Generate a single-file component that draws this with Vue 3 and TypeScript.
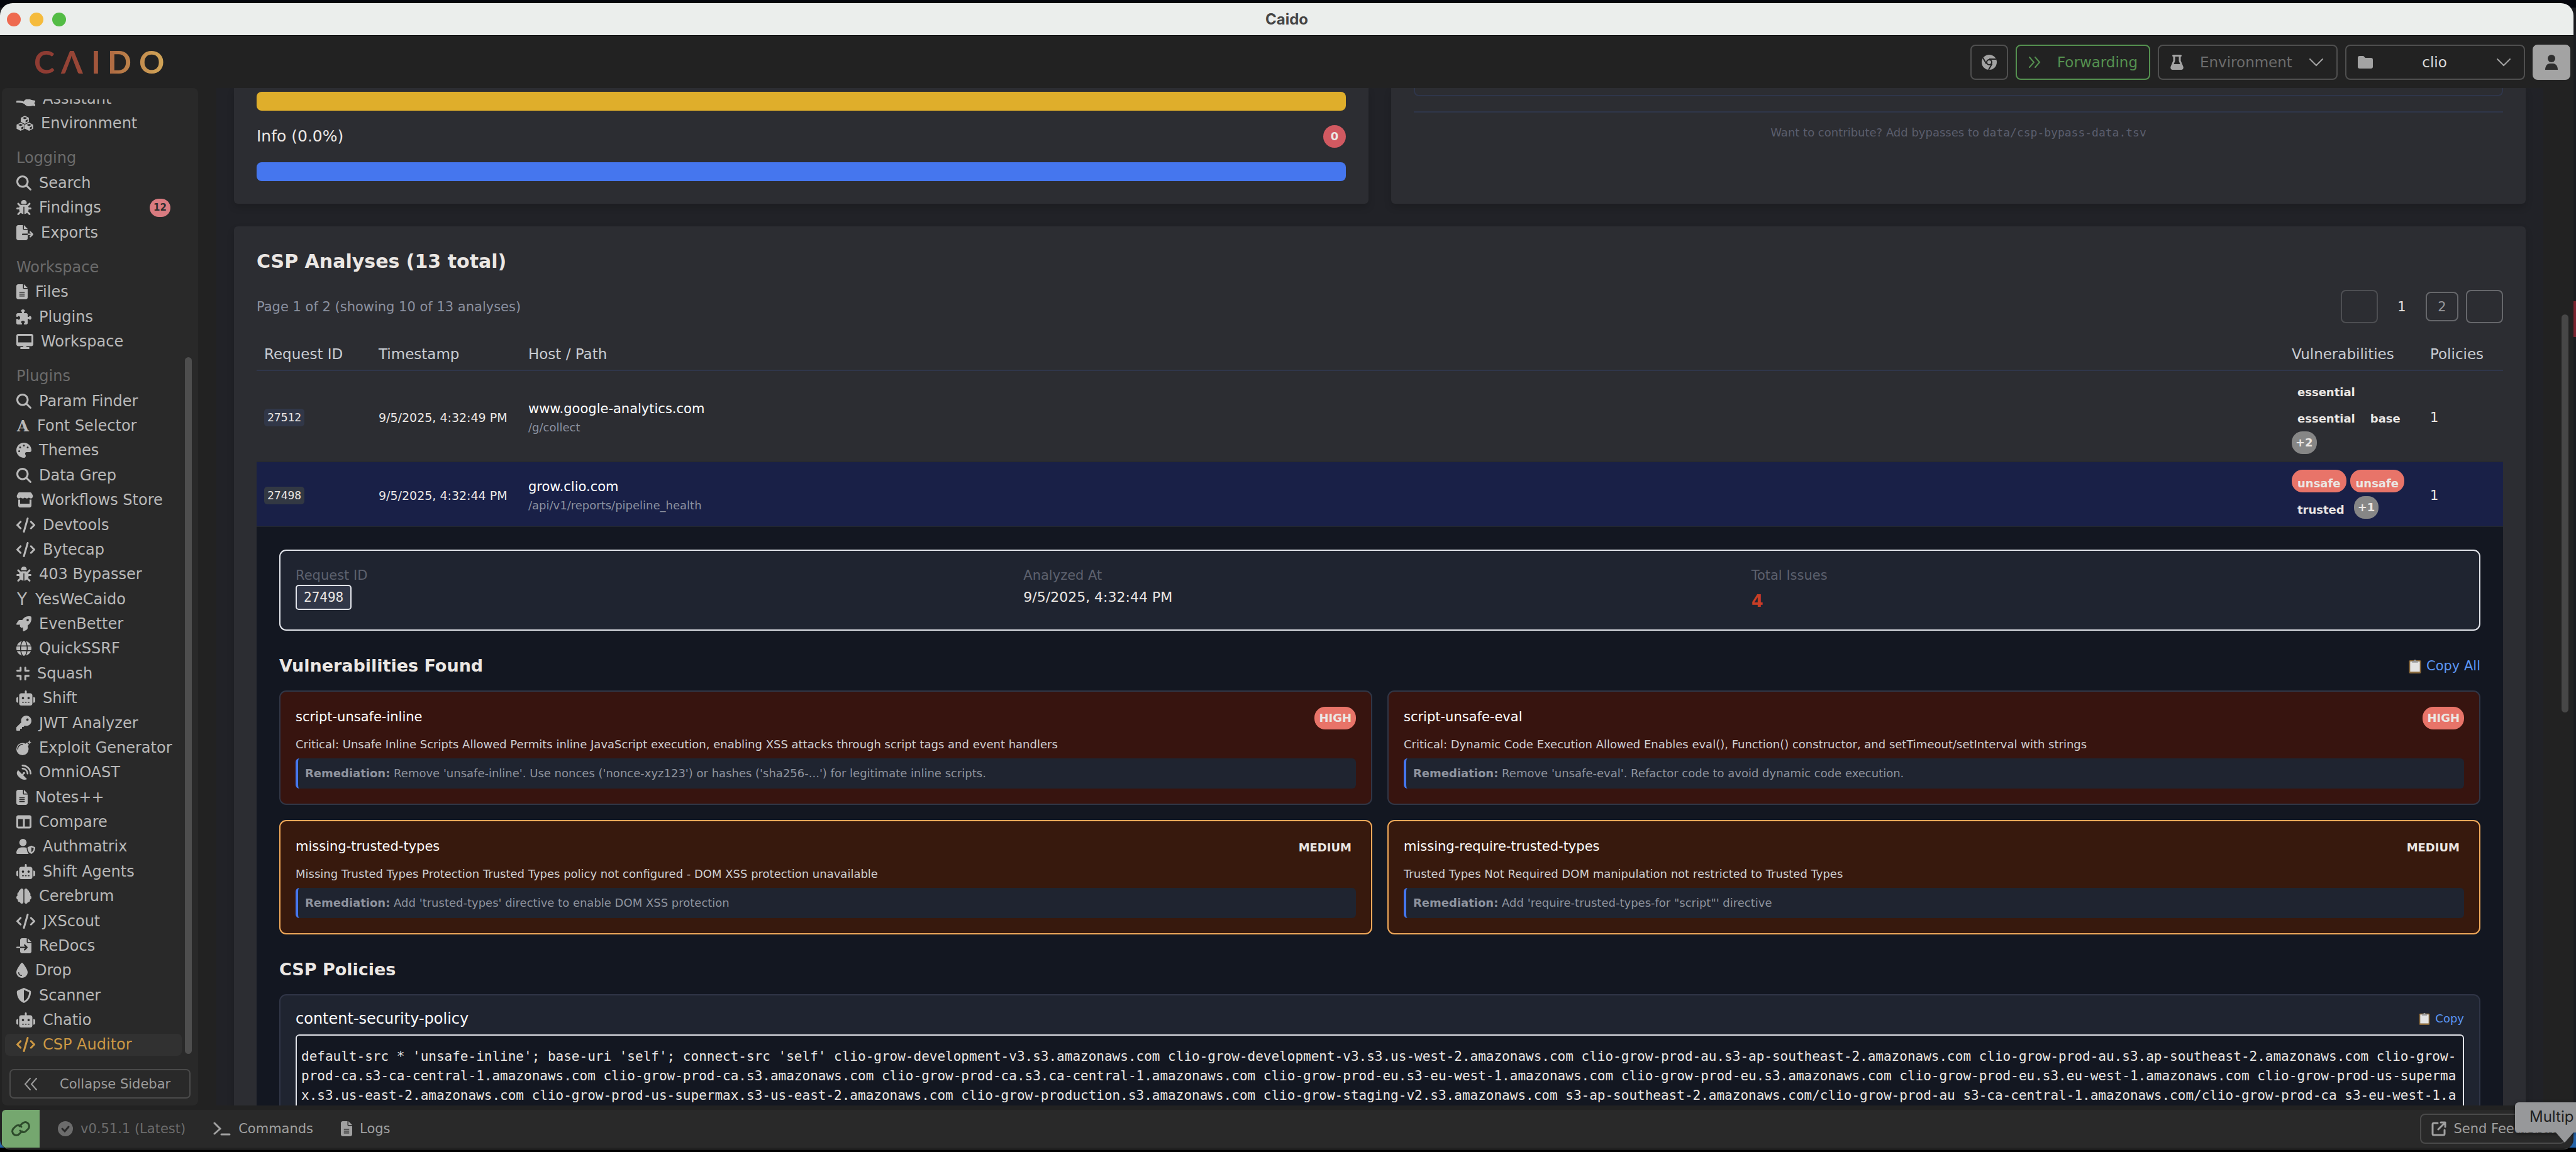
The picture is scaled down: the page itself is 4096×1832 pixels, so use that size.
<script setup lang="ts">
import { ref } from 'vue'

interface Glyph {
  w: number
  d?: string
  stroke?: number
  letter?: string
  serif?: boolean
}

interface NavItem {
  label: string
  icon: string
  badge?: number
}

interface NavGroup {
  title?: string
  items: NavItem[]
}

function cube(cx: number, cy: number): string {
  return (
    `M${cx} ${cy - 138}l136 69v138l-136 69l-136 -69v-138z` +
    `M${cx} ${cy - 98}l-84 38l84 38l84 -38z` +
    `M${cx + 26} ${cy + 22}v70l70 -36v-66z`
  )
}

const glyphs: Record<string, Glyph> = {
  assistant: { w: 640, d: 'M0 330C90 310 180 330 250 350C300 250 420 250 520 300L640 320V380L600 400L640 440V512L560 490C440 540 330 510 270 430C180 390 90 390 0 390z' },
  cubes: { w: 576, d: cube(288, 138) + cube(144, 374) + cube(432, 374) },
  search: { w: 512, d: 'M416 208c0 45.9-14.9 88.3-40 122.7L502.6 457.4c12.5 12.5 12.5 32.8 0 45.3s-32.8 12.5-45.3 0L330.7 376c-34.4 25.2-76.8 40-122.7 40C93.1 416 0 322.9 0 208S93.1 0 208 0S416 93.1 416 208zM208 352a144 144 0 1 0 0-288 144 144 0 1 0 0 288z' },
  bug: { w: 512, d: 'M256 0c53 0 96 43 96 96v3.6c0 15.7-12.7 28.4-28.4 28.4H188.4c-15.7 0-28.4-12.7-28.4-28.4V96c0-53 43-96 96-96zM41.4 105.4c12.5-12.5 32.8-12.5 45.3 0l64 64c.7 .7 1.3 1.4 1.9 2.1c14.2-7.3 30.4-11.4 47.5-11.4H312c17.1 0 33.2 4.1 47.5 11.4c.6-.7 1.2-1.4 1.9-2.1l64-64c12.5-12.5 32.8-12.5 45.3 0s12.5 32.8 0 45.3l-64 64c-.7 .7-1.4 1.3-2.1 1.9c6.2 12 10.1 25.3 11.1 39.5H480c17.7 0 32 14.3 32 32s-14.3 32-32 32H416c0 24.6-5.5 47.8-15.4 68.6c2.2 1.3 4.2 2.9 6 4.8l64 64c12.5 12.5 12.5 32.8 0 45.3s-32.8 12.5-45.3 0l-63.1-63.1c-24.5 21.8-55.8 36.2-90.3 39.6V240c0-8.8-7.2-16-16-16s-16 7.2-16 16V479.2c-34.5-3.4-65.8-17.8-90.3-39.6L86.6 502.6c-12.5 12.5-32.8 12.5-45.3 0s-12.5-32.8 0-45.3l64-64c1.9-1.9 3.9-3.4 6-4.8C101.5 367.8 96 344.6 96 320H32c-17.7 0-32-14.3-32-32s14.3-32 32-32H96.3c1.1-14.1 5-27.5 11.1-39.5c-.7-.6-1.4-1.2-2.1-1.9l-64-64c-12.5-12.5-12.5-32.8 0-45.3z' },
  fileExport: { w: 576, d: 'M0 64C0 28.7 28.7 0 64 0H224V128c0 17.7 14.3 32 32 32H384V288H216c-13.3 0-24 10.7-24 24s10.7 24 24 24H384V448c0 35.3-28.7 64-64 64H64c-35.3 0-64-28.7-64-64V64zM384 336V288H494.1l-39-39c-9.4-9.4-9.4-24.6 0-33.9s24.6-9.4 33.9 0l80 80c9.4 9.4 9.4 24.6 0 33.9l-80 80c-9.4 9.4-24.6 9.4-33.9 0s-9.4-24.6 0-33.9l39-39H384zm0-208H256V0L384 128z' },
  fileImport: { w: 512, d: 'M128 64c0-35.3 28.7-64 64-64H352V128c0 17.7 14.3 32 32 32H512V448c0 35.3-28.7 64-64 64H192c-35.3 0-64-28.7-64-64V336H302.1l-39 39c-9.4 9.4-9.4 24.6 0 33.9s24.6 9.4 33.9 0l80-80c9.4-9.4 9.4-24.6 0-33.9l-80-80c-9.4-9.4-24.6-9.4-33.9 0s-9.4 24.6 0 33.9l39 39H128V64zm0 224v48H24c-13.3 0-24-10.7-24-24s10.7-24 24-24H128zM512 128H384V0L512 128z' },
  file: { w: 384, d: 'M64 0C28.7 0 0 28.7 0 64V448c0 35.3 28.7 64 64 64H320c35.3 0 64-28.7 64-64V160H256c-17.7 0-32-14.3-32-32V0H64zM256 0V128H384L256 0zM112 256H272c8.8 0 16 7.2 16 16s-7.2 16-16 16H112c-8.8 0-16-7.2-16-16s7.2-16 16-16zm0 64H272c8.8 0 16 7.2 16 16s-7.2 16-16 16H112c-8.8 0-16-7.2-16-16s7.2-16 16-16zm0 64H272c8.8 0 16 7.2 16 16s-7.2 16-16 16H112c-8.8 0-16-7.2-16-16s7.2-16 16-16z' },
  puzzle: { w: 512, d: 'M192 104.8c0-9.2-5.8-17.3-13.2-22.8C167.2 73.3 160 61.3 160 48c0-26.5 28.7-48 64-48s64 21.5 64 48c0 13.3-7.2 25.3-18.8 34c-7.4 5.5-13.2 13.6-13.2 22.8c0 12.8 10.4 23.2 23.2 23.2H336c26.5 0 48 21.5 48 48v56.8c0 12.8 10.4 23.2 23.2 23.2c9.2 0 17.3-5.8 22.8-13.2c8.7-11.6 20.7-18.8 34-18.8c26.5 0 48 28.7 48 64s-21.5 64-48 64c-13.3 0-25.3-7.2-34-18.8c-5.5-7.4-13.6-13.2-22.8-13.2c-12.8 0-23.2 10.4-23.2 23.2V464c0 26.5-21.5 48-48 48H279.2c-12.8 0-23.2-10.4-23.2-23.2c0-9.2 5.8-17.3 13.2-22.8c11.6-8.7 18.8-20.7 18.8-34c0-26.5-28.7-48-64-48s-64 21.5-64 48c0 13.3 7.2 25.3 18.8 34c7.4 5.5 13.2 13.6 13.2 22.8c0 12.8-10.4 23.2-23.2 23.2H48c-26.5 0-48-21.5-48-48V343.2C0 330.4 10.4 320 23.2 320c9.2 0 17.3 5.8 22.8 13.2C54.7 344.8 66.7 352 80 352c26.5 0 48-28.7 48-64s-21.5-64-48-64c-13.3 0-25.3 7.2-34 18.8C40.5 250.2 32.4 256 23.2 256C10.4 256 0 245.6 0 232.8V176c0-26.5 21.5-48 48-48H168.8c12.8 0 23.2-10.4 23.2-23.2z' },
  desktop: { w: 576, d: 'M64 0C28.7 0 0 28.7 0 64V352c0 35.3 28.7 64 64 64H240l-10.7 32H160c-17.7 0-32 14.3-32 32s14.3 32 32 32H416c17.7 0 32-14.3 32-32s-14.3-32-32-32H346.7L336 416H512c35.3 0 64-28.7 64-64V64c0-35.3-28.7-64-64-64H64zM512 64V288H64V64H512z' },
  font: { w: 448, letter: 'A', serif: true },
  palette: { w: 512, d: 'M512 256c0 .9 0 1.8 0 2.7c-.4 36.5-33.6 61.3-70.1 61.3H344c-26.5 0-48 21.5-48 48c0 3.4 .4 6.7 1 9.9c2.1 10.2 6.5 20 10.8 29.9c6.1 13.8 12.1 27.5 12.1 42c0 31.8-21.6 60.7-53.4 62c-3.5 .1-7 .2-10.6 .2C114.6 512 0 397.4 0 256S114.6 0 256 0S512 114.6 512 256zM128 288a32 32 0 1 0 -64 0 32 32 0 1 0 64 0zm0-96a32 32 0 1 0 0-64 32 32 0 1 0 0 64zM288 96a32 32 0 1 0 -64 0 32 32 0 1 0 64 0zm96 96a32 32 0 1 0 0-64 32 32 0 1 0 0 64z' },
  store: { w: 576, d: 'M100 0H476C490 0 500 6 508 18L552 92C578 140 548 208 494 208C466 208 444 196 426 178C408 196 384 208 357 208C330 208 306 196 288 178C270 196 246 208 219 208C192 208 168 196 150 178C132 196 110 208 82 208C28 208 -2 140 24 92L68 18C76 6 86 0 100 0zM64 244H128V384H448V244H512V448C512 483 483 512 448 512H128C93 512 64 483 64 448z' },
  code: { w: 640, d: 'M392.8 1.2c-17-4.9-34.7 5-39.6 22l-128 448c-4.9 17 5 34.7 22 39.6s34.7-5 39.6-22l128-448c4.9-17-5-34.7-22-39.6zm80.6 120.1c-12.5 12.5-12.5 32.8 0 45.3L562.7 256l-89.4 89.4c-12.5 12.5-12.5 32.8 0 45.3s32.8 12.5 45.3 0l112-112c12.5-12.5 12.5-32.8 0-45.3l-112-112c-12.5-12.5-32.8-12.5-45.3 0zm-306.7 0c-12.5-12.5-32.8-12.5-45.3 0l-112 112c-12.5 12.5-12.5 32.8 0 45.3l112 112c12.5 12.5 32.8 12.5 45.3 0s12.5-32.8 0-45.3L77.3 256l89.4-89.4c12.5-12.5 12.5-32.8 0-45.3z' },
  y: { w: 384, letter: 'Y' },
  rocket: { w: 512, d: 'M156.6 384.9L125.7 354c-8.5-8.5-11.5-20.8-7.7-32.2c3-8.9 7-20.5 11.8-33.8L24 288c-8.6 0-16.6-4.6-20.9-12.1s-4.2-16.7 .2-24.1l52.5-88.5c13-21.9 36.5-35.3 61.9-35.3l82.3 0c2.4-4 4.8-7.7 7.2-11.3C289.1-4.1 411.1-8.1 483.9 5.3c11.6 2.1 20.6 11.2 22.8 22.8c13.4 72.9 9.3 194.8-111.4 276.7c-3.5 2.4-7.3 4.8-11.3 7.2v82.3c0 25.4-13.4 49-35.3 61.9l-88.5 52.5c-7.4 4.4-16.6 4.5-24.1 .2s-12.1-12.2-12.1-20.9V380.8c-14.1 4.9-26.4 8.9-35.7 11.9c-11.2 3.6-23.4 .5-31.8-7.8zM384 168a40 40 0 1 0 0-80 40 40 0 1 0 0 80z' },
  globe: { w: 512, d: 'M352 256c0 22.2-1.2 43.6-3.3 64H163.3c-2.2-20.4-3.3-41.8-3.3-64s1.2-43.6 3.3-64H348.7c2.2 20.4 3.3 41.8 3.3 64zm28.8-64H503.9c5.3 20.5 8.1 41.9 8.1 64s-2.8 43.5-8.1 64H380.8c2.1-20.6 3.2-42 3.2-64s-1.1-43.4-3.2-64zm112.6-32H376.7c-10-63.9-29.8-117.4-55.3-151.6c78.3 20.7 142 77.5 171.9 151.6zm-149.1 0H167.7c6.1-36.4 15.5-68.6 27-94.7c10.5-23.6 22.2-40.7 33.5-51.5C239.4 3.2 248.7 0 256 0s16.6 3.2 27.8 13.8c11.3 10.8 23 27.9 33.5 51.5c11.6 26 20.9 58.2 27 94.7zm-209 0H18.6C48.6 85.9 112.2 29.1 190.6 8.4C165.1 42.6 145.3 96.1 135.3 160zM8.1 192H131.2c-2.1 20.6-3.2 42-3.2 64s1.1 43.4 3.2 64H8.1C2.8 299.5 0 278.1 0 256s2.8-43.5 8.1-64zM194.7 446.6c-11.6-26-20.9-58.2-27-94.6H344.3c-6.1 36.4-15.5 68.6-27 94.6c-10.5 23.6-22.2 40.7-33.5 51.5C272.6 508.8 263.3 512 256 512s-16.6-3.2-27.8-13.8c-11.3-10.8-23-27.9-33.5-51.5zM135.3 352c10 63.9 29.8 117.4 55.3 151.6C112.2 482.9 48.6 426.1 18.6 352H135.3zm358.1 0c-30 74.1-93.6 130.9-171.9 151.6c25.5-34.2 45.2-87.7 55.3-151.6H493.4z' },
  compress: { w: 448, stroke: 64, d: 'M144 56V160H32M304 56V160H416M32 336H144V456M416 336H304V456' },
  robot: { w: 640, d: 'M320 0c17.7 0 32 14.3 32 32V96H472c39.8 0 72 32.2 72 72V440c0 39.8-32.2 72-72 72H168c-39.8 0-72-32.2-72-72V168c0-39.8 32.2-72 72-72H288V32c0-17.7 14.3-32 32-32zM208 384c-8.8 0-16 7.2-16 16s7.2 16 16 16h32c8.8 0 16-7.2 16-16s-7.2-16-16-16H208zm96 0c-8.8 0-16 7.2-16 16s7.2 16 16 16h32c8.8 0 16-7.2 16-16s-7.2-16-16-16H304zm96 0c-8.8 0-16 7.2-16 16s7.2 16 16 16h32c8.8 0 16-7.2 16-16s-7.2-16-16-16H400zM264 256a40 40 0 1 0 -80 0 40 40 0 1 0 80 0zm152 40a40 40 0 1 0 0-80 40 40 0 1 0 0 80zM48 224H64V416H48c-26.5 0-48-21.5-48-48V272c0-26.5 21.5-48 48-48zm544 0c26.5 0 48 21.5 48 48v96c0 26.5-21.5 48-48 48H576V224h16z' },
  key: { w: 512, d: 'M336 352c97.2 0 176-78.8 176-176S433.2 0 336 0S160 78.8 160 176c0 18.7 2.9 36.8 8.3 53.7L7 391c-4.5 4.5-7 10.6-7 17v80c0 13.3 10.7 24 24 24h80c13.3 0 24-10.7 24-24V448h40c13.3 0 24-10.7 24-24V384h40c6.4 0 12.5-2.5 17-7l33.3-33.3c16.9 5.4 35 8.3 53.7 8.3zM376 96a40 40 0 1 1 0 80 40 40 0 1 1 0-80z' },
  bomb: { w: 512, d: 'M208 96C245 96 280 106 310 122L336 96C346 86 358 86 368 96L416 144C426 154 426 166 416 176L390 202C406 232 416 267 416 304A208 208 0 1 1 208 96zM208 160A16 16 0 0 0 208 128C111 128 32 207 32 304A16 16 0 0 0 64 304C64 224 128 160 208 160zM440 0L459 53L512 72L459 91L440 144L421 91L368 72L421 53z' },
  dish: { w: 512, d: 'M60 188L192 320L224 288A36 36 0 1 1 262 322L230 358L362 490C290 530 190 520 96 426C-6 326 -2 262 60 188zM208 0C376 0 512 136 512 304A28 28 0 0 1 456 304C456 167 345 56 208 56A28 28 0 0 1 208 0zM208 104C318 104 408 194 408 304A28 28 0 0 1 352 304C352 225 287 160 208 160A28 28 0 0 1 208 104z' },
  columns: { w: 512, d: 'M0 96C0 60.7 28.7 32 64 32H448c35.3 0 64 28.7 64 64V416c0 35.3-28.7 64-64 64H64c-35.3 0-64-28.7-64-64V96zm64 64V416H224V160H64zm384 0H288V416H448V160z' },
  userShield: { w: 640, d: 'M224 0A124 124 0 1 1 224 248A124 124 0 1 1 224 0zM178 288H270C300 288 326 294 350 306C352 390 376 456 418 512H30C13 512 0 498 0 482C0 374 80 288 178 288zM509 229L625 275C634 279 640 288 640 297C640 362 614 466 509 510C404 466 378 362 378 297C378 288 384 279 393 275zM509 286V452C564 422 586 372 588 316z' },
  brain: { w: 512, d: 'M184 0C215 0 240 25 240 56V456C240 487 215 512 184 512C155 512 131 490 128 462C123 463 118 464 112 464C77 464 48 435 48 400C48 393 49 385 52 379C22 367 0 338 0 304C0 272 19 245 46 232C37 221 32 207 32 192C32 161 54 136 82 130C81 125 80 119 80 112C80 82 100 57 128 51C131 22 155 0 184 0zM328 0C357 0 381 22 384 51C412 57 432 82 432 112C432 119 431 125 430 130C458 136 480 161 480 192C480 207 475 221 466 232C493 245 512 272 512 304C512 338 490 367 460 379C463 385 464 393 464 400C464 435 435 464 400 464C394 464 389 463 384 462C381 490 357 512 328 512C297 512 272 487 272 456V56C272 25 297 0 328 0z' },
  drop: { w: 384, d: 'M192 512C86 512 0 426 0 320C0 228.8 130.2 57.7 166.6 11.7C172.6 4.2 181.5 0 191.1 0h1.8c9.6 0 18.5 4.2 24.5 11.7C253.8 57.7 384 228.8 384 320c0 106-86 192-192 192zM96 336c0-8.8-7.2-16-16-16s-16 7.2-16 16c0 61.9 50.1 112 112 112c8.8 0 16-7.2 16-16s-7.2-16-16-16c-44.2 0-80-35.8-80-80z' },
  shield: { w: 512, d: 'M256 0c4.6 0 9.2 1 13.4 2.9L457.7 82.8c22 9.3 38.4 31 38.3 57.2c-.5 99.2-41.3 280.7-213.6 363.2c-16.7 8-36.1 8-52.8 0C57.3 420.7 16.5 239.2 16 140c-.1-26.2 16.3-47.9 38.3-57.2L242.7 2.9C246.8 1 251.4 0 256 0zm0 66.8V444.8C394 378 431.1 230.1 432 141.4L256 66.8z' },
}

const groups: NavGroup[] = [
  {
    items: [
      { label: 'Assistant', icon: 'assistant' },
      { label: 'Environment', icon: 'cubes' },
    ],
  },
  {
    title: 'Logging',
    items: [
      { label: 'Search', icon: 'search' },
      { label: 'Findings', icon: 'bug', badge: 12 },
      { label: 'Exports', icon: 'fileExport' },
    ],
  },
  {
    title: 'Workspace',
    items: [
      { label: 'Files', icon: 'file' },
      { label: 'Plugins', icon: 'puzzle' },
      { label: 'Workspace', icon: 'desktop' },
    ],
  },
  {
    title: 'Plugins',
    items: [
      { label: 'Param Finder', icon: 'search' },
      { label: 'Font Selector', icon: 'font' },
      { label: 'Themes', icon: 'palette' },
      { label: 'Data Grep', icon: 'search' },
      { label: 'Workflows Store', icon: 'store' },
      { label: 'Devtools', icon: 'code' },
      { label: 'Bytecap', icon: 'code' },
      { label: '403 Bypasser', icon: 'bug' },
      { label: 'YesWeCaido', icon: 'y' },
      { label: 'EvenBetter', icon: 'rocket' },
      { label: 'QuickSSRF', icon: 'globe' },
      { label: 'Squash', icon: 'compress' },
      { label: 'Shift', icon: 'robot' },
      { label: 'JWT Analyzer', icon: 'key' },
      { label: 'Exploit Generator', icon: 'bomb' },
      { label: 'OmniOAST', icon: 'dish' },
      { label: 'Notes++', icon: 'file' },
      { label: 'Compare', icon: 'columns' },
      { label: 'Authmatrix', icon: 'userShield' },
      { label: 'Shift Agents', icon: 'robot' },
      { label: 'Cerebrum', icon: 'brain' },
      { label: 'JXScout', icon: 'code' },
      { label: 'ReDocs', icon: 'fileImport' },
      { label: 'Drop', icon: 'drop' },
      { label: 'Scanner', icon: 'shield' },
      { label: 'Chatio', icon: 'robot' },
      { label: 'CSP Auditor', icon: 'code' },
    ],
  },
]

const active = ref('CSP Auditor')

interface Analysis {
  id: number
  time: string
  host: string
  path: string
  tags: { text: string; high?: boolean }[]
  more: string
  policies: number
}

const analyses: Analysis[] = [
  {
    id: 27512,
    time: '9/5/2025, 4:32:49 PM',
    host: 'www.google-analytics.com',
    path: '/g/collect',
    tags: [{ text: 'essential' }, { text: 'essential' }, { text: 'base' }],
    more: '+2',
    policies: 1,
  },
  {
    id: 27498,
    time: '9/5/2025, 4:32:44 PM',
    host: 'grow.clio.com',
    path: '/api/v1/reports/pipeline_health',
    tags: [{ text: 'unsafe', high: true }, { text: 'unsafe', high: true }, { text: 'trusted' }],
    more: '+1',
    policies: 1,
  },
]

const selected = ref(27498)

const findings = [
  {
    name: 'script-unsafe-inline',
    severity: 'high',
    text: 'Critical: Unsafe Inline Scripts Allowed Permits inline JavaScript execution, enabling XSS attacks through script tags and event handlers',
    fix: "Remove 'unsafe-inline'. Use nonces ('nonce-xyz123') or hashes ('sha256-...') for legitimate inline scripts.",
  },
  {
    name: 'script-unsafe-eval',
    severity: 'high',
    text: 'Critical: Dynamic Code Execution Allowed Enables eval(), Function() constructor, and setTimeout/setInterval with strings',
    fix: "Remove 'unsafe-eval'. Refactor code to avoid dynamic code execution.",
  },
  {
    name: 'missing-trusted-types',
    severity: 'medium',
    text: 'Missing Trusted Types Protection Trusted Types policy not configured - DOM XSS protection unavailable',
    fix: "Add 'trusted-types' directive to enable DOM XSS protection",
  },
  {
    name: 'missing-require-trusted-types',
    severity: 'medium',
    text: 'Trusted Types Not Required DOM manipulation not restricted to Trusted Types',
    fix: "Add 'require-trusted-types-for \"script\"' directive",
  },
]

const policy = [
  "default-src * 'unsafe-inline'; base-uri 'self'; connect-src 'self' clio-grow-development-v3.s3.amazonaws.com clio-grow-development-v3.s3.us-west-2.amazonaws.com clio-grow-prod-au.s3-ap-southeast-2.amazonaws.com clio-grow-prod-au.s3.ap-southeast-2.amazonaws.com clio-grow-",
  'prod-ca.s3-ca-central-1.amazonaws.com clio-grow-prod-ca.s3.amazonaws.com clio-grow-prod-ca.s3.ca-central-1.amazonaws.com clio-grow-prod-eu.s3-eu-west-1.amazonaws.com clio-grow-prod-eu.s3.amazonaws.com clio-grow-prod-eu.s3.eu-west-1.amazonaws.com clio-grow-prod-us-superma',
  'x.s3.us-east-2.amazonaws.com clio-grow-prod-us-supermax.s3-us-east-2.amazonaws.com clio-grow-production.s3.amazonaws.com clio-grow-staging-v2.s3.amazonaws.com s3-ap-southeast-2.amazonaws.com/clio-grow-prod-au s3-ca-central-1.amazonaws.com/clio-grow-prod-ca s3-eu-west-1.a',
].join('\n')
</script>

<template>
  <div class="desktop">
    <div class="window">
      <div class="titlebar">
        <div class="lights">
          <span class="light close"></span>
          <span class="light minimize"></span>
          <span class="light zoom"></span>
        </div>
        <div class="title">Caido</div>
        <div class="lights-spacer"></div>
      </div>

      <header class="topbar">
        <svg class="logo" viewBox="0 0 210 70" role="img" aria-label="Caido">
          <defs>
            <linearGradient id="brand" x1="0" y1="0" x2="210" y2="0" gradientUnits="userSpaceOnUse">
              <stop offset="0.1" stop-color="#8f3c33" />
              <stop offset="0.4" stop-color="#9a4a38" />
              <stop offset="0.7" stop-color="#bb7f49" />
              <stop offset="1" stop-color="#d3a758" />
            </linearGradient>
          </defs>
          <text x="0 43 91 117 167" y="53" fill="url(#brand)">CΛIDO</text>
        </svg>
        <div class="tools">
          <button class="tool square" aria-label="Open browser">
            <svg viewBox="0 0 24 24" class="ic24">
              <circle cx="12" cy="12" r="12" fill="#a3a3a3" />
              <circle cx="12" cy="12" r="4" fill="#a3a3a3" stroke="#222" stroke-width="2" />
              <path d="M12 7H23M7.600 14.500L2 5M16.400 14.500L11 24" stroke="#222" stroke-width="2" fill="none" />
            </svg>
          </button>
          <button class="tool forwarding">
            <svg viewBox="0 0 20 24" class="ic20">
              <path d="M2 4L9 12L2 20M11 4L18 12L11 20" fill="none" stroke="currentColor" stroke-width="2" stroke-linecap="round" />
            </svg>
            Forwarding
          </button>
          <label class="tool picker env">
            <svg viewBox="0 0 448 512" class="ic21">
              <path fill="currentColor" d="M96 0H352A32 32 0 0 1 352 64V196L437 404C455 456 428 512 372 512H76C20 512 -7 456 11 404L96 196V64A32 32 0 0 1 96 0zM160 64V208L116 320H332L288 208V64z" fill-rule="evenodd" />
            </svg>
            <select aria-label="Environment"><option>Environment</option></select>
            <svg viewBox="0 0 24 24" class="ic24 chev"><path d="M2 7L12 17L22 7" /></svg>
          </label>
          <label class="tool picker project">
            <svg viewBox="0 0 24 24" class="ic24">
              <path fill="currentColor" d="M3 2H9L12 5H21A3 3 0 0 1 24 8V19A3 3 0 0 1 21 22H3A3 3 0 0 1 0 19V5A3 3 0 0 1 3 2z" />
            </svg>
            <select aria-label="Project"><option>clio</option></select>
            <svg viewBox="0 0 24 24" class="ic24 chev"><path d="M2 7L12 17L22 7" /></svg>
          </label>
          <button class="tool square user" aria-label="Account">
            <svg viewBox="0 0 24 24" class="ic24">
              <circle cx="12" cy="6" r="6" fill="#2f2f2f" />
              <path fill="#2f2f2f" d="M2 24C2 18 5 14 10 14H14C19 14 22 18 22 24z" />
            </svg>
          </button>
        </div>
      </header>

      <div class="body">
        <aside class="sidebar">
          <div class="nav-wrap">
            <nav class="nav">
              <div class="nav-inner">
                <section v-for="(g, gi) in groups" :key="gi" class="group" :style="{ flexGrow: g.items.length + (g.title ? 1 : 0) }">
                  <h2 v-if="g.title" class="group-title">{{ g.title }}</h2>
                  <a
                    v-for="item in g.items"
                    :key="item.label"
                    href="#"
                    class="nav-item"
                    :class="{ active: item.label === active }"
                    @click.prevent="active = item.label"
                  >
                    <svg :viewBox="`0 0 ${glyphs[item.icon].w} 512`" class="nav-icon" aria-hidden="true">
                      <text
                        v-if="glyphs[item.icon].letter"
                        :x="glyphs[item.icon].w / 2"
                        y="450"
                        text-anchor="middle"
                        :class="glyphs[item.icon].serif ? 'letter-serif' : 'letter-sans'"
                      >{{ glyphs[item.icon].letter }}</text>
                      <path
                        v-else-if="glyphs[item.icon].stroke"
                        :d="glyphs[item.icon].d"
                        fill="none"
                        stroke="currentColor"
                        stroke-linecap="round"
                        stroke-linejoin="round"
                        :stroke-width="glyphs[item.icon].stroke"
                      />
                      <path v-else :d="glyphs[item.icon].d" fill="currentColor" fill-rule="evenodd" />
                    </svg>
                    <span>{{ item.label }}</span>
                    <span v-if="item.badge" class="nav-badge">{{ item.badge }}</span>
                  </a>
                </section>
              </div>
            </nav>
            <div class="rail nav-rail"><div class="thumb"></div></div>
          </div>
          <button class="collapse">
            <svg viewBox="0 0 24 24" class="ic24">
              <path d="M11 3L3 12L11 21M21 3L13 12L21 21" fill="none" stroke="currentColor" stroke-width="2" stroke-linecap="round" />
            </svg>
            <span>Collapse Sidebar</span>
          </button>
        </aside>

        <main class="main">
          <div class="top-cards">
            <section class="card stats">
              <div class="bar yellow"></div>
              <div class="stat-row"><span>Info (0.0%)</span><span class="zero">0</span></div>
              <div class="bar blue"></div>
            </section>
            <section class="card bypass">
              <div class="bypass-list"></div>
              <p class="contribute">Want to contribute? Add bypasses to <code>data/csp-bypass-data.tsv</code></p>
            </section>
          </div>

          <section class="card analyses">
            <h1>CSP Analyses (13 total)</h1>
            <div class="pager">
              <span class="pager-text">Page 1 of 2 (showing 10 of 13 analyses)</span>
              <div class="pages">
                <button class="step" disabled aria-label="Previous page"></button>
                <button class="page current">1</button>
                <button class="page">2</button>
                <button class="step" aria-label="Next page"></button>
              </div>
            </div>

            <table>
              <colgroup>
                <col class="c-id" /><col class="c-time" /><col /><col class="c-vuln" /><col class="c-pol" />
              </colgroup>
              <thead>
                <tr>
                  <th>Request ID</th><th>Timestamp</th><th>Host / Path</th><th>Vulnerabilities</th><th>Policies</th>
                </tr>
              </thead>
              <tbody>
                <tr v-for="a in analyses" :key="a.id" class="row" :class="{ selected: a.id === selected }" @click="selected = a.id">
                  <td><code class="id">{{ a.id }}</code></td>
                  <td class="time">{{ a.time }}</td>
                  <td>
                    <div class="host">{{ a.host }}</div>
                    <div class="path">{{ a.path }}</div>
                  </td>
                  <td class="tag-cell">
                    <div class="tags">
                      <span v-for="(t, i) in a.tags" :key="i" class="tag" :class="{ high: t.high }">{{ t.text }}</span>
                      <span class="more">{{ a.more }}</span>
                    </div>
                  </td>
                  <td class="count">{{ a.policies }}</td>
                </tr>
                <tr>
                  <td colspan="5" class="detail">
                    <div class="summary">
                      <div>
                        <div class="label">Request ID</div>
                        <code class="id large">27498</code>
                      </div>
                      <div>
                        <div class="label">Analyzed At</div>
                        <div class="when">9/5/2025, 4:32:44 PM</div>
                      </div>
                      <div>
                        <div class="label">Total Issues</div>
                        <div class="issues">4</div>
                      </div>
                    </div>

                    <div class="section-head">
                      <h2>Vulnerabilities Found</h2>
                      <button class="copy">
                        <svg viewBox="0 0 20 24" class="clip">
                          <rect x="0" y="2" width="20" height="22" rx="2" fill="#8a6a3c" />
                          <rect x="2" y="4" width="16" height="17" fill="#e4e4e4" />
                          <path d="M5 6V3H8A2 2 0 0 1 12 3H15V6z" fill="#9a9a9a" />
                        </svg>
                        Copy All
                      </button>
                    </div>

                    <div class="findings">
                      <article v-for="f in findings" :key="f.name" class="finding" :class="f.severity">
                        <div class="finding-head">
                          <span class="finding-name">{{ f.name }}</span>
                          <span class="severity">{{ f.severity.toUpperCase() }}</span>
                        </div>
                        <p class="finding-text">{{ f.text }}</p>
                        <div class="fix"><strong>Remediation:</strong> {{ f.fix }}</div>
                      </article>
                    </div>

                    <div class="section-head"><h2>CSP Policies</h2></div>
                    <div class="policy">
                      <div class="policy-head">
                        <span>content-security-policy</span>
                        <button class="copy small">
                          <svg viewBox="0 0 20 24" class="clip">
                            <rect x="0" y="2" width="20" height="22" rx="2" fill="#8a6a3c" />
                            <rect x="2" y="4" width="16" height="17" fill="#e4e4e4" />
                            <path d="M5 6V3H8A2 2 0 0 1 12 3H15V6z" fill="#9a9a9a" />
                          </svg>
                          Copy
                        </button>
                      </div>
                      <pre>{{ policy }}</pre>
                    </div>
                  </td>
                </tr>
              </tbody>
            </table>
          </section>
        </main>
        <div class="rail main-rail"><div class="thumb"></div></div>
      </div>

      <footer class="statusbar">
        <button class="link" aria-label="Connection">
          <svg viewBox="0 0 32 24" class="ic32">
            <g fill="none" stroke="#2d4a2b" stroke-width="3" stroke-linecap="round">
              <path d="M14 8L18 4A6 6 0 0 1 28 12L24 16A6 6 0 0 1 15 15" />
              <path d="M18 16L14 20A6 6 0 0 1 4 12L8 8A6 6 0 0 1 17 9" />
            </g>
          </svg>
        </button>
        <div class="status version">
          <svg viewBox="0 0 24 24" class="ic24">
            <circle cx="12" cy="12" r="12" fill="currentColor" />
            <path d="M7 12L11 16L17 9" fill="none" stroke="#292929" stroke-width="3" stroke-linecap="round" />
          </svg>
          v0.51.1 (Latest)
        </div>
        <button class="status">
          <svg viewBox="0 0 28 24" class="ic28">
            <path d="M2 3L11 12L2 20M13 21H26" fill="none" stroke="currentColor" stroke-width="3" stroke-linecap="round" />
          </svg>
          Commands
        </button>
        <button class="status">
          <svg viewBox="0 0 384 512" class="ic18"><path :d="glyphs.file.d" fill="currentColor" fill-rule="evenodd" /></svg>
          Logs
        </button>
        <div class="feedback-wrap">
          <button class="feedback">
            <svg viewBox="0 0 24 24" class="ic24">
              <path d="M10 3H4A2 2 0 0 0 2 5V20A2 2 0 0 0 4 22H19A2 2 0 0 0 21 20V14M15 2H22V9M22 2L11 13" fill="none" stroke="currentColor" stroke-width="3" stroke-linecap="round" stroke-linejoin="round" />
            </svg>
            Send Feedback
          </button>
        </div>
      </footer>
    </div>
    <div class="tooltip">Multip</div>
  </div>
</template>

<style>
html,
body {
  margin: 0;
  background: #000;
}
</style>

<style scoped>
* {
  box-sizing: border-box;
}

button,
select {
  font: inherit;
  color: inherit;
  background: none;
  border: 0;
  padding: 0;
  margin: 0;
}

h1,
h2,
p,
pre {
  margin: 0;
}

.desktop {
  position: relative;
  height: 100vh;
  overflow: hidden;
  padding: 5px 4px 4px 0;
  background: linear-gradient(#04060c 0 12px, #1b1c20 12px 479px, #7a2430 479px 536px, #1b1c20 536px 1780px, #2563a8 1780px 1825px, #000 1825px);
  font-family: Verdana, "DejaVu Sans", sans-serif;
  font-size: 21px;
  color: #ebe7e4;
}

.window {
  display: flex;
  flex-direction: column;
  height: 100%;
  overflow: hidden;
  background: #222;
  border-radius: 20px 20px 16px 16px;
  border-bottom: 1px solid #3c3c3c;
}

.titlebar {
  display: flex;
  align-items: center;
  flex: none;
  height: 52px;
  background: #ebeeec;
  border-bottom: 1px solid #000;
}

.lights,
.lights-spacer {
  display: flex;
  gap: 14px;
  width: 140px;
  padding-left: 11px;
}

.light {
  width: 22px;
  height: 22px;
  border-radius: 50%;
}

.close { background: #ee6a50; }
.minimize { background: #f5bb3c; }
.zoom { background: #53bc45; }

.title {
  flex: 1;
  text-align: center;
  font: 700 24px Inter, sans-serif;
  color: #454545;
}

.topbar {
  display: flex;
  justify-content: space-between;
  align-items: center;
  flex: none;
  height: 83px;
  padding: 0 5px 0 54px;
}

.logo {
  width: 210px;
  height: 70px;
  overflow: visible;
  font: 700 50px Lato, sans-serif;
}

.tools {
  display: flex;
  gap: 12px;
  font-size: 23px;
}

.tool {
  display: flex;
  align-items: center;
  height: 56px;
  border: 2px solid #4f4f4f;
  border-radius: 8px;
  color: #a3a3a3;
}

.square {
  justify-content: center;
  width: 60px;
}

.user {
  background: #a3a3a3;
  border-color: #a3a3a3;
}

.forwarding {
  gap: 26px;
  padding: 0 18px;
  border-color: #559150;
  color: #559150;
}

.picker {
  width: 286px;
  padding: 0 20px 0 18px;
}

.picker select {
  flex: 1;
  min-width: 0;
  appearance: none;
}

.env { gap: 26px; }
.env select { color: #6c6c6c; margin-right: -26px; }
.project select { color: #dcdcdc; text-align-last: center; }

.chev {
  fill: none;
  stroke: #a3a3a3;
  stroke-width: 2;
  stroke-linecap: round;
}

.ic18 { width: 18px; height: 24px; }
.ic20 { width: 20px; height: 24px; }
.ic21 { width: 21px; height: 24px; }
.ic24 { width: 24px; height: 24px; }
.ic28 { width: 28px; height: 24px; }
.ic32 { width: 32px; height: 24px; }

.tool svg,
.status svg,
.feedback svg,
.collapse svg {
  flex: none;
}

.body {
  display: flex;
  flex: 1;
  min-height: 0;
}

.sidebar {
  display: flex;
  flex-direction: column;
  flex: none;
  width: 312px;
  margin-left: 3px;
  padding: 18px 10px 11px 5px;
  background: #292929;
  border-radius: 8px;
}

.nav-wrap {
  display: flex;
  flex: 1;
  gap: 5px;
  min-height: 0;
}

.nav {
  display: flex;
  flex: 1;
  flex-direction: column;
  min-height: 0;
  overflow: hidden;
}

.nav-inner {
  display: flex;
  flex: 1;
  flex-direction: column;
  gap: 16px;
  margin-top: -21px;
  min-height: 0;
}

.group {
  display: flex;
  flex-direction: column;
  flex-basis: 0;
  min-height: 0;
}

.group-title,
.nav-item {
  display: flex;
  flex: 1 1 0;
  align-items: center;
  min-height: 0;
  margin: 2px 0;
  font-size: 24px;
  font-weight: 400;
  line-height: 34px;
}

.group-title {
  padding-left: 18px;
  color: #6b6b6b;
}

.nav-item {
  gap: 12px;
  padding: 0 18px;
  color: #b9b9b9;
  text-decoration: none;
  white-space: nowrap;
  border-radius: 7px;
}

.nav-item.active {
  background: #313131;
  color: #cc9844;
}

.nav-icon {
  height: 24px;
  flex: none;
  overflow: visible;
}

.letter-serif {
  font: 700 520px "DejaVu Serif", serif;
  fill: currentColor;
}

.letter-sans {
  font: 400 560px "DejaVu Sans", sans-serif;
  fill: currentColor;
}

.nav-badge {
  display: flex;
  align-items: center;
  justify-content: center;
  width: 33px;
  height: 29px;
  margin-left: auto;
  border-radius: 15px;
  background: #d97b80;
  color: #2d2d2d;
  font-size: 15px;
  font-weight: 700;
}

.rail {
  display: flex;
  flex-direction: column;
  flex: none;
}

.thumb {
  width: 11px;
  border-radius: 6px;
  background: #4e4e4e;
}

.nav-rail {
  width: 11px;
  padding-bottom: 5px;
  justify-content: flex-end;
}

.nav-rail .thumb { height: 73%; }

.collapse {
  display: flex;
  align-items: center;
  flex: none;
  gap: 34px;
  height: 47px;
  margin: 19px 2px 0 7px;
  padding: 0 20px;
  border: 2px solid #4a4a4a;
  border-radius: 7px;
  color: #9c9c9c;
}

.main {
  flex: 1;
  min-width: 0;
  margin-left: 29px;
  padding: 0 28px;
  overflow: hidden;
  background: #212227;
}

.main-rail {
  width: 48px;
  padding: 360px 0 0 29px;
}

.main-rail .thumb { height: 633px; background: #474747; }

.card {
  background: #2c2d32;
  border-radius: 6px;
  box-shadow: 0 6px 12px rgba(0, 0, 0, 0.15);
}

.top-cards {
  display: grid;
  grid-template-columns: 1fr 1fr;
  gap: 36px;
  margin-bottom: 36px;
}

.top-cards .card {
  border-radius: 0 0 6px 6px;
}

.stats { padding: 6px 36px 36px; }

.bar {
  height: 30px;
  border-radius: 8px;
}

.yellow { background: #dfae2b; }
.blue { background: #4576ee; }

.stat-row {
  display: flex;
  justify-content: space-between;
  align-items: center;
  padding: 23px 0;
  font-size: 25px;
  line-height: 36px;
}

.zero {
  width: 36px;
  height: 36px;
  border-radius: 18px;
  background: #d15961;
  font-size: 18px;
  font-weight: 700;
  text-align: center;
}

.bypass { padding: 0 36px; }

.bypass-list {
  height: 13px;
  border: 2px solid #2f364a;
  border-top: 0;
  border-radius: 0 0 8px 8px;
}

.contribute {
  margin-top: 24px;
  padding-top: 18px;
  border-top: 2px solid #2f364a;
  font-size: 18px;
  line-height: 28px;
  text-align: center;
  color: #5b5e6d;
}

code,
pre {
  font-family: "DejaVu Sans Mono", monospace;
}

.analyses { padding: 36px 36px 0; }

h1 {
  font-size: 30px;
  line-height: 40px;
}

.pager {
  display: flex;
  justify-content: space-between;
  align-items: center;
  margin: 25px 0 24px;
  color: #8b91a0;
}

.pages {
  display: flex;
  align-items: center;
  gap: 12px;
}

.step,
.page {
  width: 59px;
  height: 53px;
  border: 2px solid #66676b;
  border-radius: 8px;
}

.step:disabled { border-color: #4d4e52; }

.page {
  width: 52px;
  height: 47px;
  color: #96979b;
}

.current {
  border-color: transparent;
  color: #ebe7e4;
}

table {
  width: 100%;
  table-layout: fixed;
  border-collapse: separate;
  border-spacing: 0;
}

.c-id { width: 182px; }
.c-time { width: 238px; }
.c-vuln { width: 220px; }
.c-pol { width: 128px; }

th {
  height: 52px;
  padding: 0 12px;
  border-bottom: 2px solid #30364a;
  font-size: 23px;
  font-weight: 400;
  text-align: left;
  color: #c8ccd2;
}

td { padding: 0; }

.row td {
  padding: 14px 12px 10px;
  border-bottom: 1px solid #23272c;
}

.row .tag-cell {
  padding: 12px;
}

.selected { background: #192047; }

.id {
  display: inline-block;
  padding: 0 5px;
  border-radius: 5px;
  background: #313748;
  font-size: 18px;
  line-height: 28px;
}

.selected .id { background: #323843; }

.time { font-size: 19px; }

.host {
  line-height: 32px;
  color: #fff;
}

.path {
  font-size: 18px;
  line-height: 28px;
  color: #8b91a0;
}

.tags {
  display: flex;
  flex-wrap: wrap;
  gap: 6px;
}

.tag,
.more,
.severity {
  height: 36px;
  border-radius: 17px;
  font-size: 18px;
  font-weight: 700;
  line-height: 36px;
}

.tag {
  padding: 8px 9px 0;
  line-height: 28px;
}

.tag.high,
.high .severity {
  background: #e87469;
}

.more {
  padding: 0 6px;
  background: #868686;
}

.detail {
  padding: 36px 36px 0;
  background: #131721;
}

.summary {
  display: grid;
  grid-template-columns: repeat(3, 1fr);
  gap: 24px;
  height: 129px;
  padding: 24px;
  border: 2px solid #e2e4ea;
  border-radius: 11px;
  background: #1f2430;
}

.label {
  line-height: 30px;
  color: #5d616e;
}

.large {
  padding: 0 11px;
  border: 2px solid #e2e4ea;
  background: #313748;
  font-size: 21px;
  line-height: 36px;
}

.when {
  padding-top: 4px;
  font-size: 22px;
  line-height: 32px;
}

.issues {
  padding-top: 6px;
  font-size: 27px;
  font-weight: 700;
  line-height: 40px;
  color: #c73e26;
}

.section-head {
  display: flex;
  justify-content: space-between;
  align-items: center;
  margin: 36px 0 19px;
}

.section-head h2 {
  font-size: 27px;
  line-height: 40px;
}

.copy {
  display: flex;
  align-items: center;
  gap: 8px;
  color: #5b96f5;
}

.copy.small { font-size: 18px; }

.clip {
  width: 20px;
  height: 23px;
}

.small .clip {
  width: 18px;
  height: 20px;
}

.findings {
  display: grid;
  grid-template-columns: 1fr 1fr;
  gap: 24px;
}

.finding {
  padding: 24px;
  border: 2px solid #303646;
  border-radius: 11px;
  background: #37140f;
}

.finding.medium {
  border-color: #f0a95a;
  background: #37190d;
}

.finding-head {
  display: flex;
  justify-content: space-between;
  line-height: 32px;
}

.finding-name { color: #fff; }

.severity { padding: 0 7px; }

.finding-text {
  margin: 10px 0 9px;
  font-size: 18px;
  line-height: 27px;
  color: #cfd0d3;
}

.fix {
  padding: 0 11px;
  border-left: 4px solid #4576ee;
  border-radius: 6px;
  background: #1f2430;
  font-size: 18px;
  line-height: 48px;
  color: #8f949f;
}

.policy {
  padding: 24px;
  border: 2px solid #303546;
  border-radius: 11px;
  background: #1f2430;
}

.policy-head {
  display: flex;
  justify-content: space-between;
  align-items: center;
  margin-bottom: 12px;
  font-size: 24px;
  line-height: 26px;
  color: #fff;
}

pre {
  padding: 18px 7px 60px;
  border: 2px solid #e2e4ea;
  border-radius: 6px;
  background: #131721;
  font-size: 21px;
  line-height: 31px;
}

.statusbar {
  display: flex;
  align-items: center;
  flex: none;
  height: 60px;
  margin: 7px 3px 2px;
  border-radius: 6px;
  background: #292929;
  color: #a0a0a0;
}

.link {
  display: flex;
  align-items: center;
  justify-content: center;
  width: 60px;
  height: 60px;
  border-radius: 6px 0 0 6px;
  background: #75a76f;
}

.status {
  display: flex;
  align-items: center;
  gap: 12px;
  margin-right: 44px;
}

.version {
  margin-left: 29px;
  color: #6c6c6c;
}

.feedback-wrap {
  margin-left: auto;
  margin-right: 10px;
}

.feedback {
  display: flex;
  align-items: center;
  gap: 11px;
  height: 48px;
  padding: 0 16px;
  border: 2px solid #4a4a4a;
  border-radius: 8px;
}

.tooltip {
  position: absolute;
  right: 0;
  bottom: 31px;
  width: 97px;
  height: 48px;
  padding-left: 23px;
  border-radius: 6px 0 0 6px;
  background: #97989a;
  box-shadow: 0 2px 6px rgba(0, 0, 0, 0.5);
  font: 400 24px/46px Inter, sans-serif;
  color: #1d1d1d;
}

.tooltip::after {
  content: "";
  position: absolute;
  right: 4px;
  top: 48px;
  border: 14px solid transparent;
  border-top: 16px solid #97989a;
  border-bottom: 0;
}
</style>
